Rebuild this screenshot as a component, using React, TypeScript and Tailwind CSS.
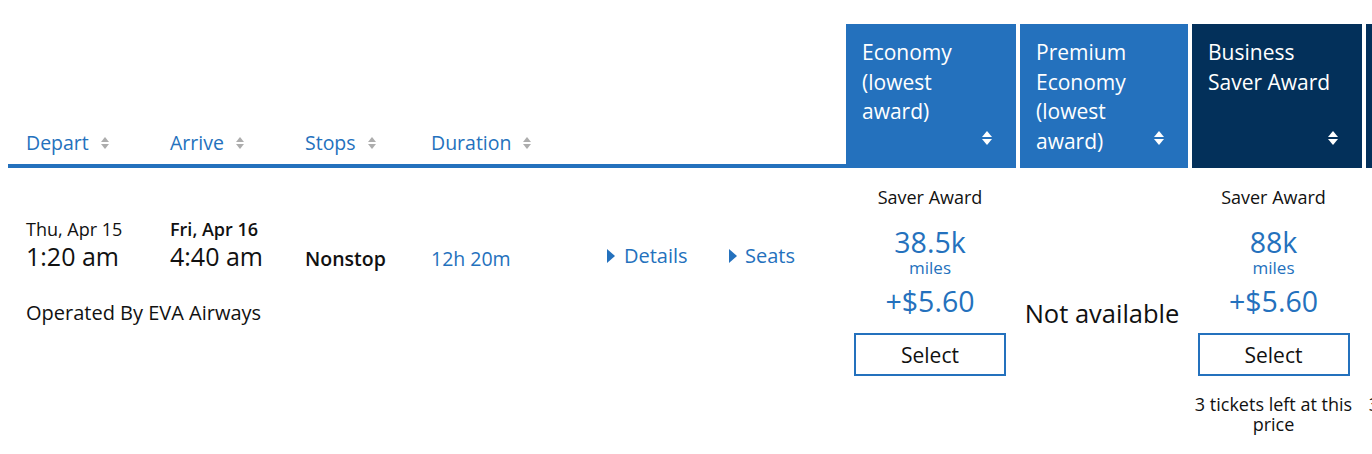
const BLUE = "#2471bd";

function SortIcon({ light }: { light?: boolean }) {
  if (light) {
    return (
      <svg width="10" height="16" viewBox="0 0 10 16" className="block">
        <polygon points="0,7 5,1 10,7" fill="#ffffff" />
        <polygon points="0,9 5,15 10,9" fill="#ffffff" />
      </svg>
    );
  }
  return (
    <svg width="8" height="14" viewBox="0 0 8 14" className="block">
      <polygon points="0,6 4,1 8,6" fill="#adadad" />
      <polygon points="0,8 4,13 8,8" fill="#adadad" />
    </svg>
  );
}

function Caret() {
  return (
    <svg width="8" height="14" viewBox="0 0 8 14" className="block">
      <polygon points="0,0 8,7 0,14" fill={BLUE} />
    </svg>
  );
}

type Fare = {
  miles: string;
  taxes: string;
  left?: string;
};

function FareColumn({
  title,
  dark,
  width,
  fare,
}: {
  title: string[];
  dark?: boolean;
  width: string;
  fare?: Fare;
}) {
  return (
    <div className={`flex shrink-0 flex-col ${width}`}>
      <div
        className={`relative h-[144px] px-[16px] pt-[14px] text-[21px] leading-[29.5px] text-white ${
          dark ? "bg-[#03305a]" : "bg-[#2471bd]"
        }`}
      >
        {title.map((line) => (
          <div key={line}>{line}</div>
        ))}
        <div className="absolute bottom-[22px] right-[24px]">
          <SortIcon light />
        </div>
      </div>
      {fare ? (
        <div
          className={`flex flex-col items-center pt-[18px] text-center ${
            dark ? "pr-[7px]" : "pr-[2px]"
          }`}
        >
          <div className="text-[18px] leading-[22px] text-[#111]">Saver Award</div>
          <div className="mt-[18px] text-[28.5px] leading-[32px] text-[#2471bd]">
            {fare.miles}
          </div>
          <div className="text-[17px] leading-[20px] text-[#2471bd]">miles</div>
          <div className="mt-[6px] text-[28.5px] leading-[34px] text-[#2471bd]">
            {fare.taxes}
          </div>
          <button className="mt-[15px] h-[43px] w-[152px] border-2 border-[#2471bd] bg-white text-[21px] leading-[28px] text-[#111]">
            Select
          </button>
          {fare.left ? (
            <div className="mt-[18px] w-[170px] shrink-0 text-[18px] leading-[20px] text-[#111]">
              {fare.left}
            </div>
          ) : null}
        </div>
      ) : (
        <div className="pr-[4px] pt-[129px] text-center text-[25.5px] leading-[32px] text-[#111]">
          Not available
        </div>
      )}
    </div>
  );
}

export default function App() {
  const headers = [
    { label: "Depart", w: "w-[144px]" },
    { label: "Arrive", w: "w-[135px]" },
    { label: "Stops", w: "w-[126px]" },
    { label: "Duration", w: "w-[160px]" },
  ];

  return (
    <div className="h-[454px] w-[1372px] overflow-hidden bg-white font-['Open_Sans',sans-serif]">
      <div className="flex pt-[24px]">
        <div className="ml-2 flex w-[838px] shrink-0 flex-col">
          <div className="flex h-[144px] items-end border-b-4 border-[#2471bd] pb-[9px] pl-[18px]">
            {headers.map((h) => (
              <div
                key={h.label}
                className={`flex items-center gap-[12px] text-[19.5px] leading-[24px] text-[#2471bd] ${h.w}`}
              >
                <span>{h.label}</span>
                <SortIcon />
              </div>
            ))}
          </div>

          <div className="pl-[18px] pt-[50px] text-[#111]">
            <div className="flex items-start">
              <div className="w-[144px]">
                <div className="text-[18px] leading-[22px]">Thu, Apr 15</div>
                <div className="text-[25px] leading-[32px]">1:20 am</div>
              </div>
              <div className="w-[135px]">
                <div className="text-[18px] font-semibold leading-[22px]">Fri, Apr 16</div>
                <div className="text-[25px] leading-[32px]">4:40 am</div>
              </div>
              <div className="w-[126px] pt-[28px] text-[19.5px] font-semibold leading-[26px]">
                Nonstop
              </div>
              <div className="w-[176px] pt-[28px] text-[19.5px] leading-[26px] text-[#2471bd]">
                12h 20m
              </div>
              <div className="flex w-[122px] items-center gap-[9px] pt-[25px] text-[20px] leading-[26px] text-[#2471bd]">
                <Caret />
                <span>Details</span>
              </div>
              <div className="flex items-center gap-[8px] pt-[25px] text-[20px] leading-[26px] text-[#2471bd]">
                <Caret />
                <span>Seats</span>
              </div>
            </div>
            <div className="mt-[28px] text-[20px] leading-[26px]">Operated By EVA Airways</div>
          </div>
        </div>

        <div className="flex gap-[4px]">
          <FareColumn
            width="w-[170px]"
            title={["Economy", "(lowest", "award)"]}
            fare={{ miles: "38.5k", taxes: "+$5.60" }}
          />
          <FareColumn width="w-[168px]" title={["Premium", "Economy", "(lowest", "award)"]} />
          <FareColumn
            width="w-[170px]"
            dark
            title={["Business", "Saver Award"]}
            fare={{ miles: "88k", taxes: "+$5.60", left: "3 tickets left at this price" }}
          />
          <FareColumn
            width="w-[170px]"
            dark
            title={["Business", "(lowest", "award)"]}
            fare={{ miles: "88k", taxes: "+$5.60", left: "3 tickets left at this price" }}
          />
        </div>
      </div>
    </div>
  );
}
